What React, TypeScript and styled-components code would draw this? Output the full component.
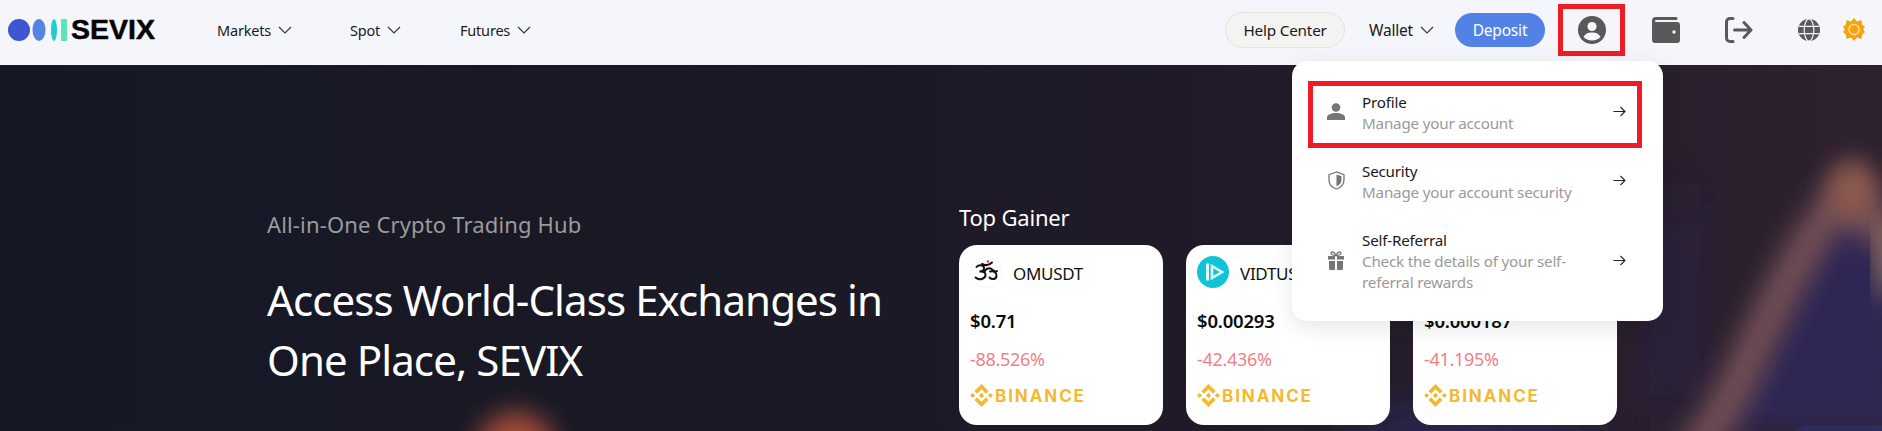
import styled, { createGlobalStyle } from "styled-components";

const GlobalStyle = createGlobalStyle`
  html, body {
    margin: 0;
    background: #171826;
  }
  body {
    font-family: "Noto Sans", "Open Sans", sans-serif;
    color: #1a1a1a;
  }
  * {
    box-sizing: border-box;
  }
`;

const Page = styled.div`
  position: relative;
  height: 431px;
  overflow: hidden;
`;

const Navbar = styled.header`
  position: relative;
  display: flex;
  align-items: center;
  justify-content: space-between;
  height: 65px;
  padding: 0 17px 6px 8px;
  background: #f5f6fb;
`;

const NavGroup = styled.div`
  display: flex;
  align-items: center;
`;

const Logo = styled.div`
  display: flex;
  align-items: center;
  width: 209px;
`;

const LogoText = styled.span`
  margin-left: 3px;
  font-family: "Liberation Sans", sans-serif;
  font-size: 28.5px;
  font-weight: 700;
  line-height: 1;
  color: #050505;
  -webkit-text-stroke: 0.5px #050505;
`;

const NavLink = styled.a<{ $width?: number; $large?: boolean }>`
  display: flex;
  align-items: center;
  gap: 7px;
  width: ${(p) => (p.$width ? `${p.$width}px` : "auto")};
  font-size: ${(p) => (p.$large ? "15.5px" : "14.5px")};
  letter-spacing: -0.2px;
  color: #1a1a1a;
`;

const HelpButton = styled.button`
  width: 120px;
  height: 36px;
  margin-right: 24px;
  border: 1px solid #e3e3de;
  border-radius: 18px;
  background: #f3f3f1;
  font: inherit;
  font-size: 15.3px;
  letter-spacing: -0.2px;
  color: #1a1a1a;
`;

const DepositButton = styled.button`
  width: 90px;
  height: 34px;
  margin-left: 21px;
  border: 0;
  border-radius: 17px;
  background: #5282e5;
  font: inherit;
  font-size: 15.5px;
  letter-spacing: -0.2px;
  color: #fff;
`;

const AccountBox = styled.div`
  display: flex;
  align-items: center;
  justify-content: center;
  width: 67px;
  height: 52px;
  margin-left: 13px;
  border: 5px solid #ee1c25;
`;

const IconSlot = styled.div<{ $left: number }>`
  display: flex;
  margin-left: ${(p) => p.$left}px;
`;

const Hero = styled.section`
  position: relative;
  display: flex;
  height: 366px;
  padding-left: 267px;
  background: linear-gradient(90deg, #161826 0%, #1a1925 40%, #201a28 62%, #2e2130 100%);
`;

const HeroArt = styled.svg`
  position: absolute;
  inset: 0;
  width: 100%;
  height: 100%;
`;

const Intro = styled.div`
  position: relative;
  width: 692px;
  padding-top: 144px;
`;

const Tagline = styled.p`
  margin: 0;
  font-size: 22px;
  line-height: 30px;
  letter-spacing: 0.15px;
  color: #9b9b9b;
`;

const Title = styled.h1`
  margin: 31px 0 0;
  width: 650px;
  font-size: 42px;
  font-weight: 400;
  line-height: 60px;
  letter-spacing: -0.9px;
  color: #fff;
`;

const Gainers = styled.div`
  position: relative;
  padding-top: 136px;
`;

const GainersTitle = styled.h2`
  margin: 0 0 12px;
  font-size: 22px;
  font-weight: 400;
  line-height: 32px;
  letter-spacing: -0.2px;
  color: #fff;
`;

const CardRow = styled.div`
  display: flex;
  gap: 23px;
`;

const Card = styled.article`
  display: flex;
  flex-direction: column;
  width: 204px;
  height: 180px;
  padding: 12px 11px 0;
  border-radius: 18px;
  background: #fff;
`;

const CardHead = styled.div`
  display: flex;
  align-items: center;
  gap: 11px;
  height: 30px;
  padding-top: 2px;
  color: #111;
  font-size: 17px;
  letter-spacing: -0.3px;
  white-space: nowrap;
`;

const CoinBadge = styled.span`
  display: flex;
  flex: none;
  width: 32px;
  height: 32px;
  margin-top: -3px;
`;

const Price = styled.div`
  margin-top: 22px;
  font-size: 18.5px;
  font-weight: 600;
  line-height: 24px;
  letter-spacing: -0.2px;
  color: #0b0b0b;
`;

const Change = styled.div`
  margin-top: 14px;
  font-size: 18px;
  line-height: 24px;
  letter-spacing: -0.3px;
  color: #f08088;
`;

const Exchange = styled.div`
  display: flex;
  align-items: center;
  gap: 2px;
  margin-top: 13px;
  font-family: "Inter", sans-serif;
  font-size: 17px;
  font-weight: 700;
  line-height: 22px;
  letter-spacing: 1.9px;
  color: #f3ba2f;
`;

const NextPanel = styled.div`
  position: absolute;
  left: 1793px;
  top: 360px;
  width: 89px;
  height: 40px;
  border-radius: 14px 0 0 0;
  background: #2e2c58;
`;

const Dropdown = styled.div`
  position: absolute;
  top: 61px;
  left: 1292px;
  display: flex;
  flex-direction: column;
  gap: 2px;
  width: 371px;
  height: 260px;
  padding: 20px 21px 14px 16px;
  border-radius: 15px;
  background: #fff;
  box-shadow: 0 6px 22px rgba(0, 0, 0, 0.1);
`;

const MenuRow = styled.a<{ $marked?: boolean }>`
  display: flex;
  align-items: center;
  border: ${(p) => (p.$marked ? "5px solid #ee1c25" : "5px solid transparent")};
  padding: 6px 11px 9px 11px;
`;

const MenuIcon = styled.span`
  display: flex;
  justify-content: center;
  flex: none;
  width: 20px;
  margin: 0 16px 3px 2px;
`;

const MenuText = styled.div`
  flex: 1;
  font-size: 15.2px;
  line-height: 21px;
`;

const MenuTitle = styled.div`
  letter-spacing: -0.2px;
  color: #1a1a1a;
`;

const MenuHint = styled.div`
  width: 225px;
  letter-spacing: -0.2px;
  color: #9a9a9a;
`;

const MenuArrow = styled.span`
  display: flex;
  margin-bottom: 3px;
`;

const Chevron = () => (
  <svg width="14" height="8" viewBox="0 0 14 8" fill="none" stroke="#333" strokeWidth="1.1">
    <path d="M1 1l6 6 6-6" />
  </svg>
);

const Arrow = () => (
  <svg width="13" height="11" viewBox="0 0 13 11" fill="none" stroke="#222" strokeWidth="1.1">
    <path d="M0.5 5.5h11.5M7.5 1l4.5 4.5L7.5 10" />
  </svg>
);

const BrandMark = () => (
  <>
    <svg width="22" height="30" viewBox="0 0 22 30">
      <circle cx="11" cy="15" r="11" fill="#4055d0" />
    </svg>
    <svg width="18" height="30" viewBox="0 0 18 30">
      <ellipse cx="9" cy="15" rx="6.5" ry="11" fill="#5485e5" />
    </svg>
    <svg width="12" height="30" viewBox="0 0 12 30">
      <ellipse cx="6" cy="15" rx="3" ry="11" fill="#1bd0cc" />
    </svg>
    <svg width="8" height="30" viewBox="0 0 8 30">
      <rect x="1" y="4" width="6" height="22" fill="#5ee3b8" />
    </svg>
  </>
);

const AccountIcon = () => (
  <svg width="28" height="28" viewBox="0 0 28 28">
    <circle cx="14" cy="14" r="14" fill="#595959" />
    <circle cx="14" cy="10.5" r="4.6" fill="#f5f6fb" />
    <path d="M5.5 21c1.5-3.4 4.6-4.6 8.5-4.6s7 1.2 8.5 4.6c-2 2.2-5 3.6-8.5 3.6s-6.500-1.400-8.500-3.600z" fill="#f5f6fb" />
  </svg>
);

const WalletIcon = () => (
  <svg width="28" height="26" viewBox="0 0 28 26">
    <path d="M4 0h20a1.500 1.500 0 0 1 0 3H3.500C3 3 3 5 3.500 5H25a3 3 0 0 1 3 3v15a3 3 0 0 1-3 3H3a3 3 0 0 1-3-3V4a4 4 0 0 1 4-4z" fill="#595959" />
    <circle cx="22" cy="15" r="1.700" fill="#f5f6fb" />
  </svg>
);

const LogoutIcon = () => (
  <svg width="28" height="26" viewBox="0 0 28 26" fill="none" stroke="#595959" strokeWidth="3" strokeLinecap="round" strokeLinejoin="round">
    <path d="M8 1.500H5a3.500 3.500 0 0 0-3.500 3.500v16A3.500 3.500 0 0 0 5 24.500h3" />
    <path d="M9.500 13h16M19 5.500l7 7.500-7 7.500" />
  </svg>
);

const GlobeIcon = () => (
  <svg width="22" height="22" viewBox="0 0 22 22" fill="#595959">
    <path d="M11 0a11 11 0 1 0 0 22 11 11 0 0 0 0-22z" />
    <g fill="none" stroke="#f5f6fb" strokeWidth="1.200">
      <path d="M1 7.300h20M1 14.700h20" />
      <ellipse cx="11" cy="11" rx="4.800" ry="11" />
    </g>
  </svg>
);

const SunIcon = () => (
  <svg width="22" height="23" viewBox="0 0 22 23">
    <path
      d="M11 0l3 3.500 4.300-1.400 1 4.400 2.700 2.500-1.800 2.500 1.800 2.500-2.700 2.500-1 4.400-4.300-1.400-3 3.500-3-3.500-4.300 1.400-1-4.400L0 14l1.800-2.500L0 9l2.700-2.500 1-4.400L8 3.500z"
      fill="#f5a30f"
    />
    <circle cx="11" cy="11.500" r="5.800" fill="#fde3a8" />
    <circle cx="11" cy="11.500" r="4.400" fill="#f5a30f" />
  </svg>
);

const PersonIcon = () => (
  <svg width="18" height="17" viewBox="0 0 18 17" fill="#757575">
    <circle cx="9" cy="4.500" r="4.300" />
    <path d="M0 17v-2.500C0 11.500 4.500 10 9 10s9 1.500 9 4.500V17z" />
  </svg>
);

const ShieldIcon = () => (
  <svg width="17" height="19" viewBox="0 0 17 19">
    <path d="M8.500 1L1 3.600v5.200c0 4.400 3 7.800 7.500 9.200 4.500-1.400 7.500-4.800 7.500-9.200V3.600z" fill="none" stroke="#757575" strokeWidth="1.300" />
    <path d="M8.500 3.500l5 1.800v3.500c0 3-1.900 5.400-5 6.700z" fill="#757575" />
  </svg>
);

const GiftIcon = () => (
  <svg width="18" height="19" viewBox="0 0 18 19" fill="#757575">
    <path d="M1 5h7v3.500H1zM10 5h7v3.500h-7zM2 10h6v9H3.500A1.500 1.500 0 0 1 2 17.500zM10 10h6v7.500a1.500 1.500 0 0 1-1.500 1.500H10z" />
    <path d="M9 4.500C7.500 1 5.500 0.500 4.500 1.500S4.500 4.500 9 4.500zM9 4.500C10.500 1 12.500 0.500 13.500 1.500S13.500 4.500 9 4.500z" fill="none" stroke="#757575" strokeWidth="1.300" />
  </svg>
);

const OmIcon = () => (
  <svg width="32" height="32" viewBox="0 0 32 32">
    <circle cx="16" cy="16" r="15.500" fill="#fff" stroke="#f6f6f6" />
    <circle cx="18" cy="5.500" r="1.300" fill="#ee3377" />
    <g fill="none" stroke="#111" strokeWidth="2" strokeLinecap="round">
      <path d="M6.500 11c2-2.500 7-2.500 7.500 0.500s-2 4-4.500 4c3.500-0.500 6.500 1 6 4s-6 5.500-10 2" />
      <path d="M14.500 15.500c1.500-3 5-4 7-2.500s3 3.500 5.500 2" />
      <path d="M20 15.500c4-1 7 1 6.500 4.500s-4.500 4-7 1.500" />
      <path d="M12 8c3 1.500 7 1.500 10-1.500" />
    </g>
  </svg>
);

const VidtIcon = () => (
  <svg width="32" height="32" viewBox="0 0 32 32">
    <circle cx="16" cy="16" r="16" fill="#0fc4d6" />
    <path d="M10.500 7.500v17" stroke="#e4fbfd" strokeWidth="3" />
    <path d="M15 10L25 16l-10 6z" fill="none" stroke="#e4fbfd" strokeWidth="2.600" />
  </svg>
);

const BinanceMark = () => (
  <svg width="23" height="23" viewBox="0 0 126.61 126.61" fill="#f3ba2f">
    <path d="m38.73 53.2 24.59-24.58 24.6 24.6 14.3-14.31L63.32 0l-38.9 38.9zM0 63.31l14.3-14.31 14.31 14.31-14.31 14.3zm38.73 10.11 24.59 24.59 24.6-24.6 14.31 14.29-.01.01-38.9 38.91-38.91-38.88-.02-.02zm59.24-10.1 14.31-14.31 14.31 14.3-14.31 14.32z" />
    <path d="m77.83 63.3-14.51-14.52-10.73 10.73-1.24 1.23-2.54 2.54 14.51 14.5 14.51-14.47z" />
  </svg>
);

const coins = [
  { symbol: "OMUSDT", icon: <OmIcon />, price: "$0.71", change: "-88.526%" },
  { symbol: "VIDTUSDT", icon: <VidtIcon />, price: "$0.00293", change: "-42.436%" },
  { symbol: "", icon: null, price: "$0.000187", change: "-41.195%" },
];

const menu = [
  { title: "Profile", hint: "Manage your account", icon: <PersonIcon />, marked: true },
  { title: "Security", hint: "Manage your account security", icon: <ShieldIcon /> },
  { title: "Self-Referral", hint: "Check the details of your self-referral rewards", icon: <GiftIcon /> },
];

export default function App() {
  return (
    <Page>
      <GlobalStyle />
      <Navbar>
        <NavGroup>
          <Logo>
            <BrandMark />
            <LogoText>SEVIX</LogoText>
          </Logo>
          <NavLink $width={133}>
            Markets <Chevron />
          </NavLink>
          <NavLink $width={110}>
            Spot <Chevron />
          </NavLink>
          <NavLink>
            Futures <Chevron />
          </NavLink>
        </NavGroup>
        <NavGroup>
          <HelpButton>Help Center</HelpButton>
          <NavLink $large>
            Wallet <Chevron />
          </NavLink>
          <DepositButton>Deposit</DepositButton>
          <AccountBox>
            <AccountIcon />
          </AccountBox>
          <IconSlot $left={27}>
            <WalletIcon />
          </IconSlot>
          <IconSlot $left={45}>
            <LogoutIcon />
          </IconSlot>
          <IconSlot $left={45}>
            <GlobeIcon />
          </IconSlot>
          <IconSlot $left={23}>
            <SunIcon />
          </IconSlot>
        </NavGroup>
      </Navbar>
      <Hero>
        <HeroArt viewBox="0 0 1882 366" preserveAspectRatio="none">
          <defs>
            <filter id="soft" x="-50%" y="-50%" width="200%" height="200%">
              <feGaussianBlur stdDeviation="13" />
            </filter>
            <filter id="wide" x="-50%" y="-50%" width="200%" height="200%">
              <feGaussianBlur stdDeviation="30" />
            </filter>
          </defs>
          <ellipse cx="516" cy="395" rx="42" ry="48" fill="#a84e38" filter="url(#soft)" />
          <ellipse cx="1470" cy="380" rx="120" ry="30" fill="#2b2a62" filter="url(#wide)" />
          <rect x="1655" y="140" width="40" height="210" fill="#2a2348" opacity="0.8" filter="url(#wide)" />
          <path d="M1700 366C1760 340 1790 170 1853 125C1890 110 1900 180 1900 366z" fill="#2f2752" filter="url(#soft)" />
          <path d="M1690 390C1745 335 1775 200 1850 125L1885 175" fill="none" stroke="#745054" strokeWidth="36" filter="url(#soft)" />
          <ellipse cx="1853" cy="125" rx="24" ry="28" fill="#8d5a4e" filter="url(#soft)" />
          <ellipse cx="1890" cy="195" rx="10" ry="38" fill="#b89068" filter="url(#soft)" />
        </HeroArt>
        <Intro>
          <Tagline>All-in-One Crypto Trading Hub</Tagline>
          <Title>Access World-Class Exchanges in One Place, SEVIX</Title>
        </Intro>
        <Gainers>
          <GainersTitle>Top Gainer</GainersTitle>
          <CardRow>
            {coins.map((coin) => (
              <Card key={coin.price}>
                <CardHead>
                  {coin.icon && <CoinBadge>{coin.icon}</CoinBadge>}
                  {coin.symbol}
                </CardHead>
                <Price>{coin.price}</Price>
                <Change>{coin.change}</Change>
                <Exchange>
                  <BinanceMark />
                  BINANCE
                </Exchange>
              </Card>
            ))}
          </CardRow>
        </Gainers>
        <NextPanel />
      </Hero>
      <Dropdown>
        {menu.map((item) => (
          <MenuRow key={item.title} $marked={item.marked}>
            <MenuIcon>{item.icon}</MenuIcon>
            <MenuText>
              <MenuTitle>{item.title}</MenuTitle>
              <MenuHint>{item.hint}</MenuHint>
            </MenuText>
            <MenuArrow>
              <Arrow />
            </MenuArrow>
          </MenuRow>
        ))}
      </Dropdown>
    </Page>
  );
}
